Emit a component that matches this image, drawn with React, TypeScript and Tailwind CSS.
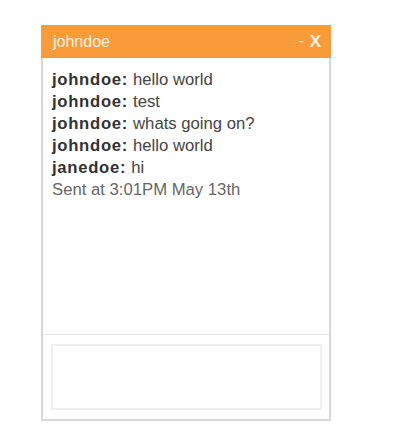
export default function App() {
  const msgs = [
    ["johndoe:", "hello world"],
    ["johndoe:", "test"],
    ["johndoe:", "whats going on?"],
    ["johndoe:", "hello world"],
    ["janedoe:", "hi"],
  ];
  return (
    <div className="w-[400px] h-[437px] bg-white pt-[25px] pl-[41px]" style={{ fontFamily: '"Liberation Sans", Arial, sans-serif' }}>
      <div className="w-[290px] flex flex-col">
        <div className="h-[33px] bg-[#f89b38] flex items-center justify-between pl-[12px] pr-[10px]">
          <span className="text-[16px] text-[#fff3e4]">johndoe</span>
          <span className="flex items-center gap-[6px] text-[#fff3e4]">
            <span className="text-[15px]">-</span>
            <span className="text-[17px] font-bold">X</span>
          </span>
        </div>
        <div className="border-x-2 border-b-2 border-[#d8d8d8] flex flex-col">
          <div className="h-[276px] pt-[11px] pl-[9px] text-[16.7px] leading-[22px]">
            {msgs.map(([n, m], i) => (
              <div key={i} className="flex">
                <span className="font-bold text-[#333333] tracking-[0.7px]">{n}</span>
                <span className="ml-[5px] text-[#444444]">{m}</span>
              </div>
            ))}
            <div className="text-[#666666]">Sent at 3:01PM May 13th</div>
          </div>
          <div className="border-t border-[#e6e6e6] pt-[9px] pb-[9px] pl-[8px] pr-[7px]">
            <div className="h-[66px] border-2 border-[#f0f0f0]" />
          </div>
        </div>
      </div>
    </div>
  );
}
